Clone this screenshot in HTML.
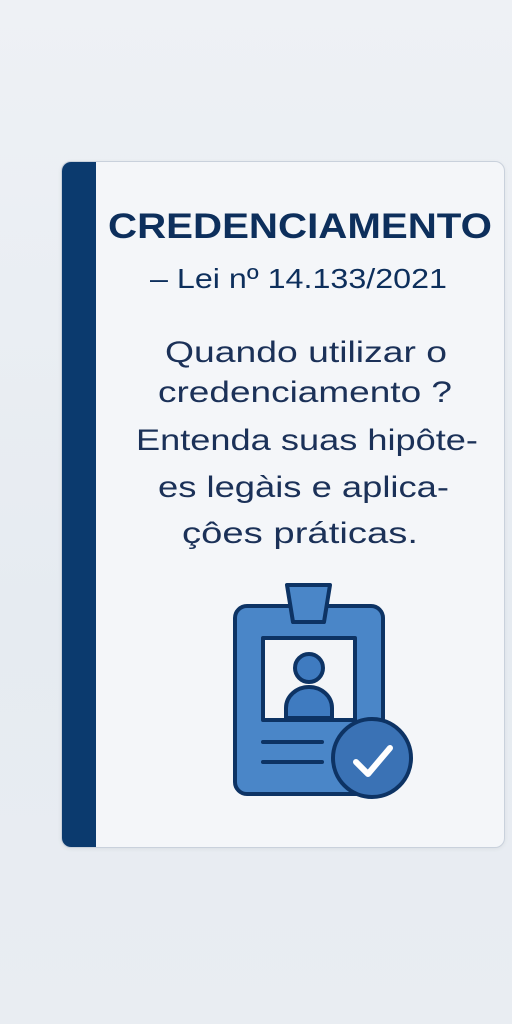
<!DOCTYPE html>
<html><head><meta charset="utf-8"><style>
html,body{margin:0;padding:0;}
body{width:512px;height:1024px;background:linear-gradient(180deg,#eef1f5,#e6ebf1 60%,#e9edf2);overflow:hidden;position:relative;font-family:"Liberation Sans",sans-serif;}
.card{position:absolute;left:61px;top:161px;width:444px;height:687px;background:#f4f6f9;border-radius:10px;border:1px solid #c9d1dc;box-sizing:border-box;overflow:hidden;box-shadow:0 1px 4px rgba(0,0,0,.06);}
.bar{position:absolute;left:0;top:0;width:34px;height:100%;background:#0b3a6e;}
svg{position:absolute;left:0;top:0;}
</style></head><body>
<div class="card"><div class="bar"></div></div>
<svg width="512" height="1024" viewBox="0 0 512 1024">
<g font-family="Liberation Sans, sans-serif" fill="#0d2f5c">
<text x="108" y="238" font-size="35" font-weight="bold" textLength="384" lengthAdjust="spacingAndGlyphs">CREDENCIAMENTO</text>
<text x="150" y="288" font-size="28" textLength="297" lengthAdjust="spacingAndGlyphs">– Lei nº 14.133/2021</text>
<g fill="#1b3158" font-size="30">
<text x="165" y="362" textLength="282" lengthAdjust="spacingAndGlyphs">Quando utilizar o</text>
<text x="158" y="402" textLength="294" lengthAdjust="spacingAndGlyphs">credenciamento ?</text>
<text x="136" y="450" textLength="342" lengthAdjust="spacingAndGlyphs">Entenda suas hipôte-</text>
<text x="158" y="497" textLength="291" lengthAdjust="spacingAndGlyphs">es legàis e aplica-</text>
<text x="182" y="543" textLength="236" lengthAdjust="spacingAndGlyphs">çôes práticas.</text>
</g></g>
<g stroke="#0d3364" stroke-width="4" stroke-linejoin="round">
<rect x="235" y="606" width="148" height="188" rx="12" fill="#4a86c8"/>
<path d="M287 585 H330 L324 622 H293 Z" fill="#4a86c8"/>
<rect x="263" y="638" width="92" height="82" fill="#f3f5f8"/>
<circle cx="309" cy="668" r="14" fill="#3f7bc0"/>
<path d="M286 718 V708 A23 21 0 0 1 332 708 V718 Z" fill="#3f7bc0"/>
<line x1="263" y1="742" x2="322" y2="742" stroke-linecap="round"/>
<line x1="263" y1="762" x2="322" y2="762" stroke-linecap="round"/>
<circle cx="372" cy="758" r="39" fill="#3a72b5"/>
</g>
<path d="M356 762 L368 774 L390 748" fill="none" stroke="#fff" stroke-width="6" stroke-linecap="round" stroke-linejoin="round"/>
</svg>
</body></html>
